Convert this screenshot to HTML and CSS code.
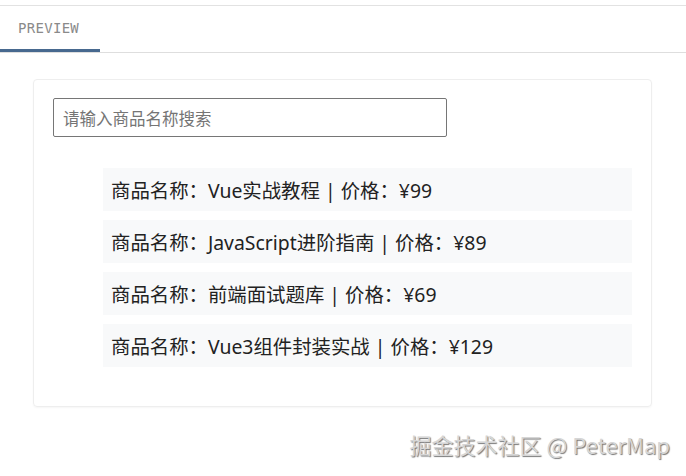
FILE: index.html
```html
<!DOCTYPE html>
<html lang="zh-CN">
<head>
  <meta charset="UTF-8" />
  <title>Preview</title>
  <link rel="stylesheet" href="styles.css">
</head>
<body>
  <div class="tabs">
    <span class="tab active">PREVIEW</span>
  </div>

  <div class="preview">
    <div class="card">
      <input type="text" class="search" placeholder="请输入商品名称搜索" />
      <ul class="goods">
        <li>商品名称：Vue实战教程 | 价格：¥99</li>
        <li>商品名称：JavaScript进阶指南 | 价格：¥89</li>
        <li>商品名称：前端面试题库 | 价格：¥69</li>
        <li>商品名称：Vue3组件封装实战 | 价格：¥129</li>
      </ul>
    </div>
  </div>

  <div class="watermark">掘金技术社区 @ PeterMap</div>
</body>
</html>
```

FILE: styles.css
```css
body {
  margin: 0;
  padding: 0;
  background: #fff;
  font-family: "Noto Sans", "Noto Sans CJK SC", sans-serif;
  position: relative;
  height: 476px;
  overflow: hidden;
}
.tabs {
  margin-top: 5px;
  border-top: 1px solid #e2e2e2;
  border-bottom: 1px solid #dedede;
  height: 46px;
  display: flex;
}
.tab {
  width: 100px;
  box-sizing: border-box;
  padding-left: 18px;
  padding-top: 14px;
  font-family: "DejaVu Sans Mono", monospace;
  font-size: 14px;
  letter-spacing: 0.3px;
  color: #8a8a8a;
}
.tab.active {
  border-bottom: 3px solid #47698f;
}
.preview {
  padding: 26px 34px 0 33px;
}
.card {
  border: 1px solid #eeeeee;
  border-radius: 4px;
  box-shadow: 0 1px 2px rgba(0,0,0,0.04);
  padding: 18px 19px 38px 19px;
  height: 270px;
}
.search {
  display: block;
  width: 394px;
  height: 39px;
  box-sizing: border-box;
  padding: 0 9px;
  border: 1px solid #767676;
  border-radius: 2px;
  font-size: 16.5px;
  font-family: "Noto Sans CJK SC", sans-serif;
  outline: none;
}
.search::placeholder {
  color: #757575;
}
.goods {
  list-style: none;
  margin: 31px 0 0 50px;
  padding: 0;
  display: flex;
  flex-direction: column;
  gap: 9px;
}
.goods li {
  background: #f8f9fa;
  height: 43px;
  line-height: 45px;
  padding: 0 8px;
  font-size: 19.4px;
  color: #222;
  font-family: "Noto Sans", "Noto Sans CJK SC", sans-serif;
}
.watermark {
  position: absolute;
  right: 16px;
  top: 428px;
  font-size: 22px;
  color: #d6d6d6;
  font-family: "Noto Sans CJK SC", sans-serif;
  text-shadow: 1px 1px 1px #777, -1px -1px 0 #fff;
}
```
